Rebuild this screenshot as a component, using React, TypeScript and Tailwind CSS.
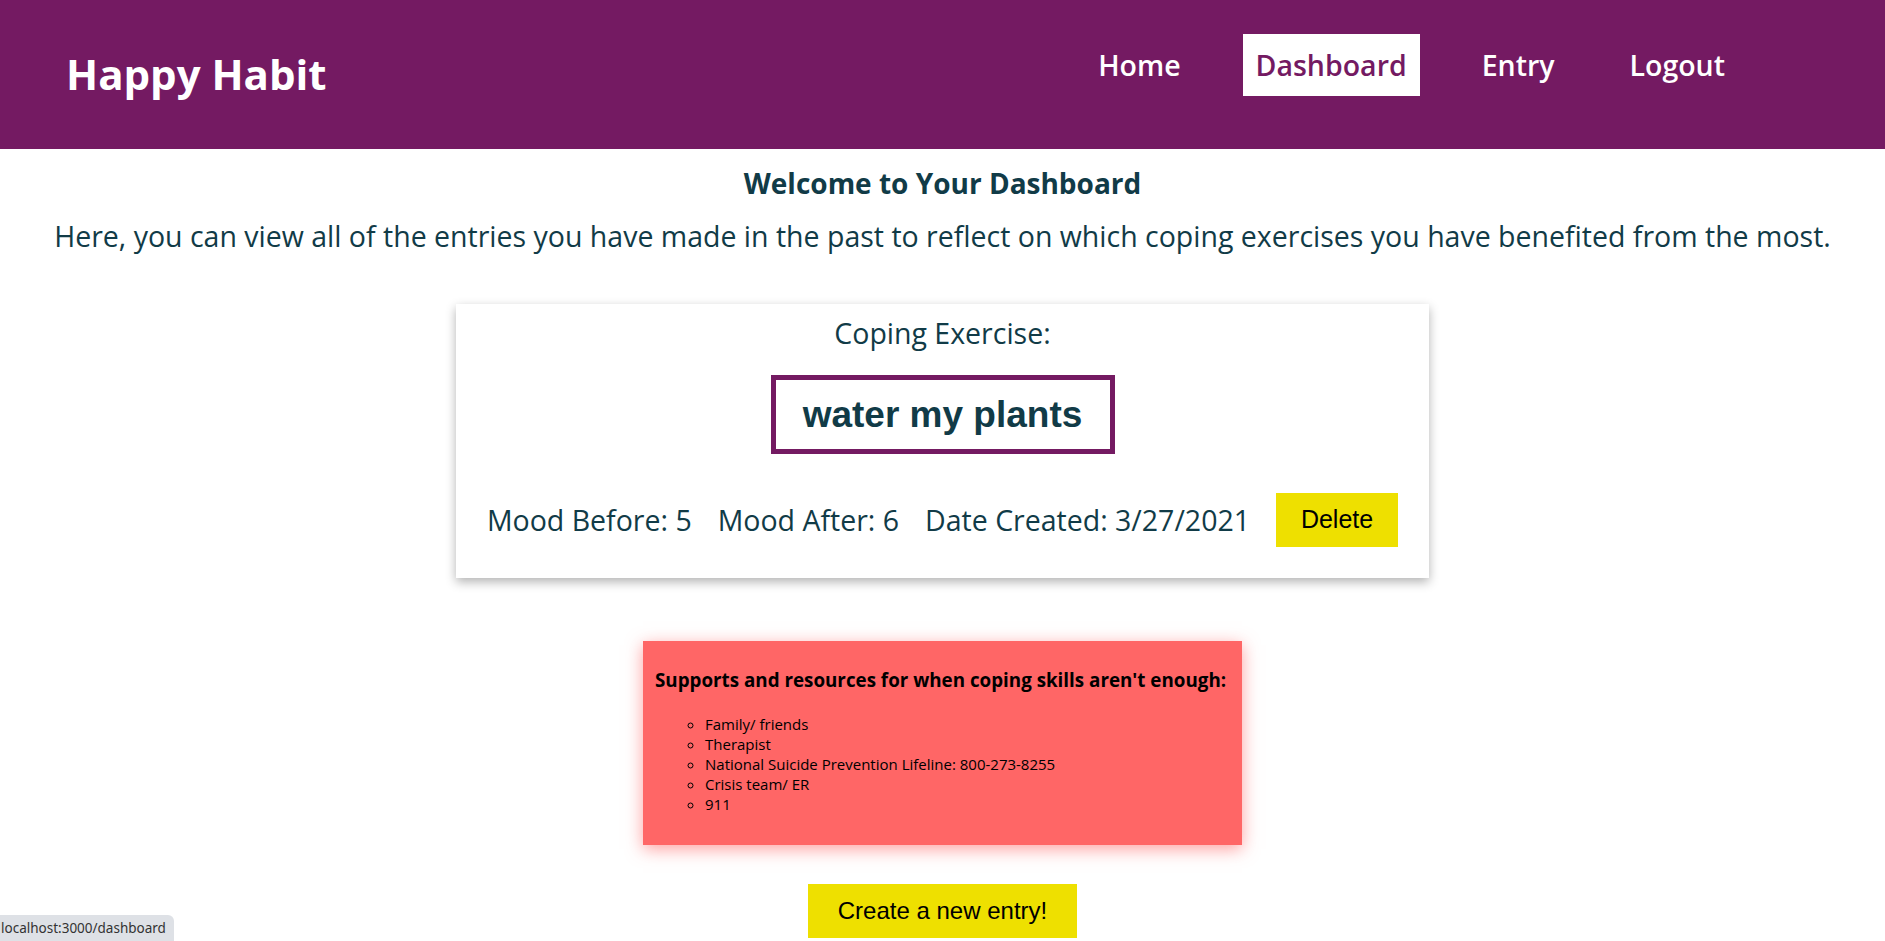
import React from 'react';

const NAV_ITEMS: { label: string; active?: boolean }[] = [
  { label: 'Home' },
  { label: 'Dashboard', active: true },
  { label: 'Entry' },
  { label: 'Logout' },
];

const RESOURCES: string[] = [
  'Family/ friends',
  'Therapist',
  'National Suicide Prevention Lifeline: 800-273-8255',
  'Crisis team/ ER',
  '911',
];

const Header: React.FC = () => {
  return (
    <header className="bg-[#741a62] h-[149px] flex items-start justify-between pl-[66px] pr-[147px]">
      <h1 className="mt-[47px] text-[42px] leading-[54px] font-bold text-white">Happy Habit</h1>
      <nav className="mt-[34px] flex items-center gap-[49px]">
        {NAV_ITEMS.map((item) => (
          <a
            key={item.label}
            href="#"
            className={`h-[62px] px-[13px] flex items-center text-[28.5px] font-semibold ${
              item.active ? 'bg-white text-[#741a62]' : 'text-white'
            }`}
          >
            {item.label}
          </a>
        ))}
      </nav>
    </header>
  );
};

const EntryCard: React.FC = () => {
  return (
    <div className="w-[973px] bg-white shadow-[0_4px_10px_rgba(0,0,0,0.3)] flex flex-col items-center pt-[10px] pb-[31px]">
      <p className="text-[28.5px] leading-[38px] text-[#113b47]">Coping Exercise:</p>
      <div className="mt-[23px] border-[5px] border-[#741a62] w-[344px] h-[79px] flex items-center justify-center">
        <span className="font-['Liberation_Sans',Arial,sans-serif] font-bold text-[37px] text-[#113b47]">water my plants</span>
      </div>
      <div className="mt-[39px] flex items-center">
        <span className="text-[28.5px] text-[#113b47]">Mood Before: 5</span>
        <span className="ml-[26px] text-[28.5px] text-[#113b47]">Mood After: 6</span>
        <span className="ml-[26px] text-[28.5px] text-[#113b47]">Date Created: 3/27/2021</span>
        <button className="ml-[26px] w-[122px] h-[54px] bg-[#eee000] font-['Liberation_Sans',Arial,sans-serif] text-[25px] text-black">
          Delete
        </button>
      </div>
    </div>
  );
};

const ResourcesBox: React.FC = () => {
  return (
    <div className="mt-[63px] w-[599px] h-[204px] bg-[#ff6666] shadow-[0_4px_16px_rgba(255,80,80,0.55)] pl-[12px] pt-[26px]">
      <h3 className="text-[18.8px] leading-[26px] font-bold text-black">
        Supports and resources for when coping skills aren't enough:
      </h3>
      <ul className="mt-[21px] pl-[50px] list-[circle] text-[15px] leading-[20px] text-black">
        {RESOURCES.map((r) => (
          <li key={r}>{r}</li>
        ))}
      </ul>
    </div>
  );
};

const App: React.FC = () => {
  return (
    <div className="min-h-screen bg-white font-['Open_Sans','Noto_Sans',sans-serif]">
      <Header />
      <main className="flex flex-col items-center">
        <h2 className="mt-[16px] text-[28px] leading-[36px] font-bold text-[#113b47]">
          Welcome to Your Dashboard
        </h2>
        <p className="mt-[16px] text-[28.5px] leading-[38px] text-[#113b47] whitespace-nowrap">
          Here, you can view all of the entries you have made in the past to reflect on which coping exercises you have benefited from the most.
        </p>
        <div className="mt-[49px]">
          <EntryCard />
        </div>
        <ResourcesBox />
        <button className="mt-[39px] w-[269px] h-[54px] bg-[#eee000] font-['Liberation_Sans',Arial,sans-serif] text-[24px] text-black">
          Create a new entry!
        </button>
      </main>
      <div className="fixed left-0 bottom-0 h-[26px] pl-[1px] pr-[8px] flex items-center bg-[#dee1e6] rounded-tr-[6px] font-['Noto_Sans',sans-serif] text-[13.5px] text-[#333] whitespace-nowrap">
        localhost:3000/dashboard
      </div>
    </div>
  );
};

export default App;
